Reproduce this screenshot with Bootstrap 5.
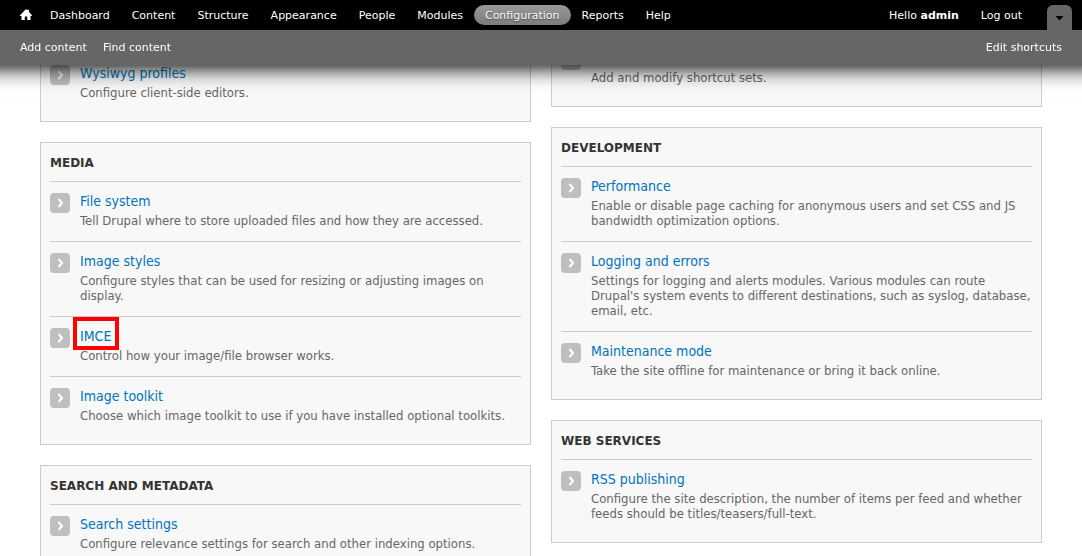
<!DOCTYPE html>
<html lang="en">
<head>
<meta charset="utf-8">
<meta name="viewport" content="width=device-width, initial-scale=1">
<title>Configuration</title>
<link rel="stylesheet" href="https://cdn.jsdelivr.net/npm/bootstrap@5.3.0/dist/css/bootstrap.min.css">
<style>
  body { background: #fff; color: #666; font: 13px/15px "DejaVu Sans Condensed", "DejaVu Sans", sans-serif; }
  a { text-decoration: none; }

  /* Toolbar and shortcut drawer */
  .admin-toolbar { font: 11px/20px "DejaVu Sans", sans-serif; }
  .admin-toolbar::before { content: ""; position: absolute; inset: 0 -20px; z-index: -1; background: #666; box-shadow: 0 3px 20px #000; }
  .admin-toolbar a { color: #fff; white-space: nowrap; }
  .admin-menu { background: #000; height: 30px; padding: 5px 10px 0 10px; }
  .admin-menu .nav-link { padding: 1px 11px 0 11px; height: 20px; color: #fff; }
  .admin-menu .nav-link.home-link { padding: 0 7px 0 10px; }
  .admin-menu .nav-link.active { background: linear-gradient(#999, #7c7c7c); border-radius: 10px; text-shadow: 0 1px 1px #444; }
  .drawer-toggle { width: 25px; height: 25px; margin-left: 14px; background: #666; border-radius: 6px 6px 0 0; }
  .shortcut-bar { padding: 8px 20px 7px 20px; }

  /* Panels */
  .config-page { padding: 0 40px; gap: 20px; }
  .config-column { gap: 20px; flex: 1 1 0; min-width: 0; }
  .column-main { padding-top: 53px; }
  .column-side { padding-top: 38px; }
  .config-panel { border: 1px solid #ccc; background: #f8f8f8; padding: 0 9px 8px 9px; }
  .config-panel.continued { border-top: 0; }
  .config-panel h3 { margin: 0; padding: 12px 0 10px 0; color: #333; font: bold 12px/16px "DejaVu Sans", sans-serif; text-transform: uppercase; }
  .config-panel dl { margin: 0; }
  .config-item { border-top: 1px solid #ccc; padding: 11px 0 10px 0; gap: 10px; }
  .config-item dt { font-weight: normal; font-size: 14px; line-height: 16px; margin-bottom: 4px; }
  .config-item dt a { color: #0074bd; }
  .config-item dd { margin: 0; padding-bottom: 3px; }
  .item-arrow { flex: none; width: 20px; height: 20px; }
  .highlighted { position: relative; }
  .highlighted::after { content: ""; position: absolute; inset: -11px -8px -6px -7px; border: 4px solid #f00; }
</style>
</head>
<body>
<svg class="d-none" aria-hidden="true">
  <symbol id="arrow" viewBox="0 0 20 20">
    <rect width="20" height="20" rx="4" fill="#bfbfbf"/>
    <path d="M8.5 6 12 10 8.5 14" fill="none" stroke="#fff" stroke-width="2"/>
  </symbol>
</svg>

<header class="admin-toolbar fixed-top">
  <nav class="admin-menu d-flex" aria-label="Administration">
    <ul class="nav flex-nowrap">
      <li><a class="nav-link home-link" href="#" aria-label="Home"><svg class="d-block" width="12" height="20" viewBox="0 0 12 20" aria-hidden="true"><path d="M6 4 7.4 5.4V4.8H9V7L12 10.2V11H10.5V15H7.2V11.6H4.8V15H1.5V11H0V10.2Z" fill="#fff"/></svg></a></li>
      <li><a class="nav-link" href="#">Dashboard</a></li>
      <li><a class="nav-link" href="#">Content</a></li>
      <li><a class="nav-link" href="#">Structure</a></li>
      <li><a class="nav-link" href="#">Appearance</a></li>
      <li><a class="nav-link" href="#">People</a></li>
      <li><a class="nav-link" href="#">Modules</a></li>
      <li><a class="nav-link active" href="#" aria-current="page">Configuration</a></li>
      <li><a class="nav-link" href="#">Reports</a></li>
      <li><a class="nav-link" href="#">Help</a></li>
    </ul>
    <ul class="nav flex-nowrap ms-auto">
      <li><a class="nav-link" href="#">Hello <strong>admin</strong></a></li>
      <li><a class="nav-link" href="#">Log out</a></li>
    </ul>
    <button type="button" class="drawer-toggle border-0 p-0 flex-shrink-0" aria-label="Hide shortcuts"><svg class="d-block" width="25" height="25" viewBox="0 0 25 25" aria-hidden="true"><path d="M8.5 11H16.5L12.5 15.4Z" fill="#000"/></svg></button>
  </nav>
  <div class="shortcut-bar d-flex">
    <div class="d-flex gap-3">
      <a href="#">Add content</a>
      <a href="#">Find content</a>
    </div>
    <a class="ms-auto" href="#">Edit shortcuts</a>
  </div>
</header>

<main class="config-page d-flex align-items-start">
  <div class="config-column column-main d-flex flex-column">
    <section class="config-panel continued">
      <dl>
        <div class="config-item d-flex"><svg class="item-arrow"><use href="#arrow"/></svg><div><dt><a href="#">Wysiwyg profiles</a></dt><dd>Configure client-side editors.</dd></div></div>
      </dl>
    </section>
    <section class="config-panel">
      <h3>Media</h3>
      <dl>
        <div class="config-item d-flex"><svg class="item-arrow"><use href="#arrow"/></svg><div><dt><a href="#">File system</a></dt><dd>Tell Drupal where to store uploaded files and how they are accessed.</dd></div></div>
        <div class="config-item d-flex"><svg class="item-arrow"><use href="#arrow"/></svg><div><dt><a href="#">Image styles</a></dt><dd>Configure styles that can be used for resizing or adjusting images on display.</dd></div></div>
        <div class="config-item d-flex"><svg class="item-arrow"><use href="#arrow"/></svg><div><dt><a class="highlighted" href="#">IMCE</a></dt><dd>Control how your image/file browser works.</dd></div></div>
        <div class="config-item d-flex"><svg class="item-arrow"><use href="#arrow"/></svg><div><dt><a href="#">Image toolkit</a></dt><dd>Choose which image toolkit to use if you have installed optional toolkits.</dd></div></div>
      </dl>
    </section>
    <section class="config-panel">
      <h3>Search and metadata</h3>
      <dl>
        <div class="config-item d-flex"><svg class="item-arrow"><use href="#arrow"/></svg><div><dt><a href="#">Search settings</a></dt><dd>Configure relevance settings for search and other indexing options.</dd></div></div>
      </dl>
    </section>
  </div>
  <div class="config-column column-side d-flex flex-column">
    <section class="config-panel continued">
      <dl>
        <div class="config-item d-flex"><svg class="item-arrow"><use href="#arrow"/></svg><div><dt><a href="#">Shortcuts</a></dt><dd>Add and modify shortcut sets.</dd></div></div>
      </dl>
    </section>
    <section class="config-panel">
      <h3>Development</h3>
      <dl>
        <div class="config-item d-flex"><svg class="item-arrow"><use href="#arrow"/></svg><div><dt><a href="#">Performance</a></dt><dd>Enable or disable page caching for anonymous users and set CSS and JS bandwidth optimization options.</dd></div></div>
        <div class="config-item d-flex"><svg class="item-arrow"><use href="#arrow"/></svg><div><dt><a href="#">Logging and errors</a></dt><dd>Settings for logging and alerts modules. Various modules can route Drupal's system events to different destinations, such as syslog, database, email, etc.</dd></div></div>
        <div class="config-item d-flex"><svg class="item-arrow"><use href="#arrow"/></svg><div><dt><a href="#">Maintenance mode</a></dt><dd>Take the site offline for maintenance or bring it back online.</dd></div></div>
      </dl>
    </section>
    <section class="config-panel">
      <h3>Web services</h3>
      <dl>
        <div class="config-item d-flex"><svg class="item-arrow"><use href="#arrow"/></svg><div><dt><a href="#">RSS publishing</a></dt><dd>Configure the site description, the number of items per feed and whether feeds should be titles/teasers/full-text.</dd></div></div>
      </dl>
    </section>
  </div>
</main>
<script src="https://cdn.jsdelivr.net/npm/bootstrap@5.3.0/dist/js/bootstrap.bundle.min.js"></script>
</body>
</html>
